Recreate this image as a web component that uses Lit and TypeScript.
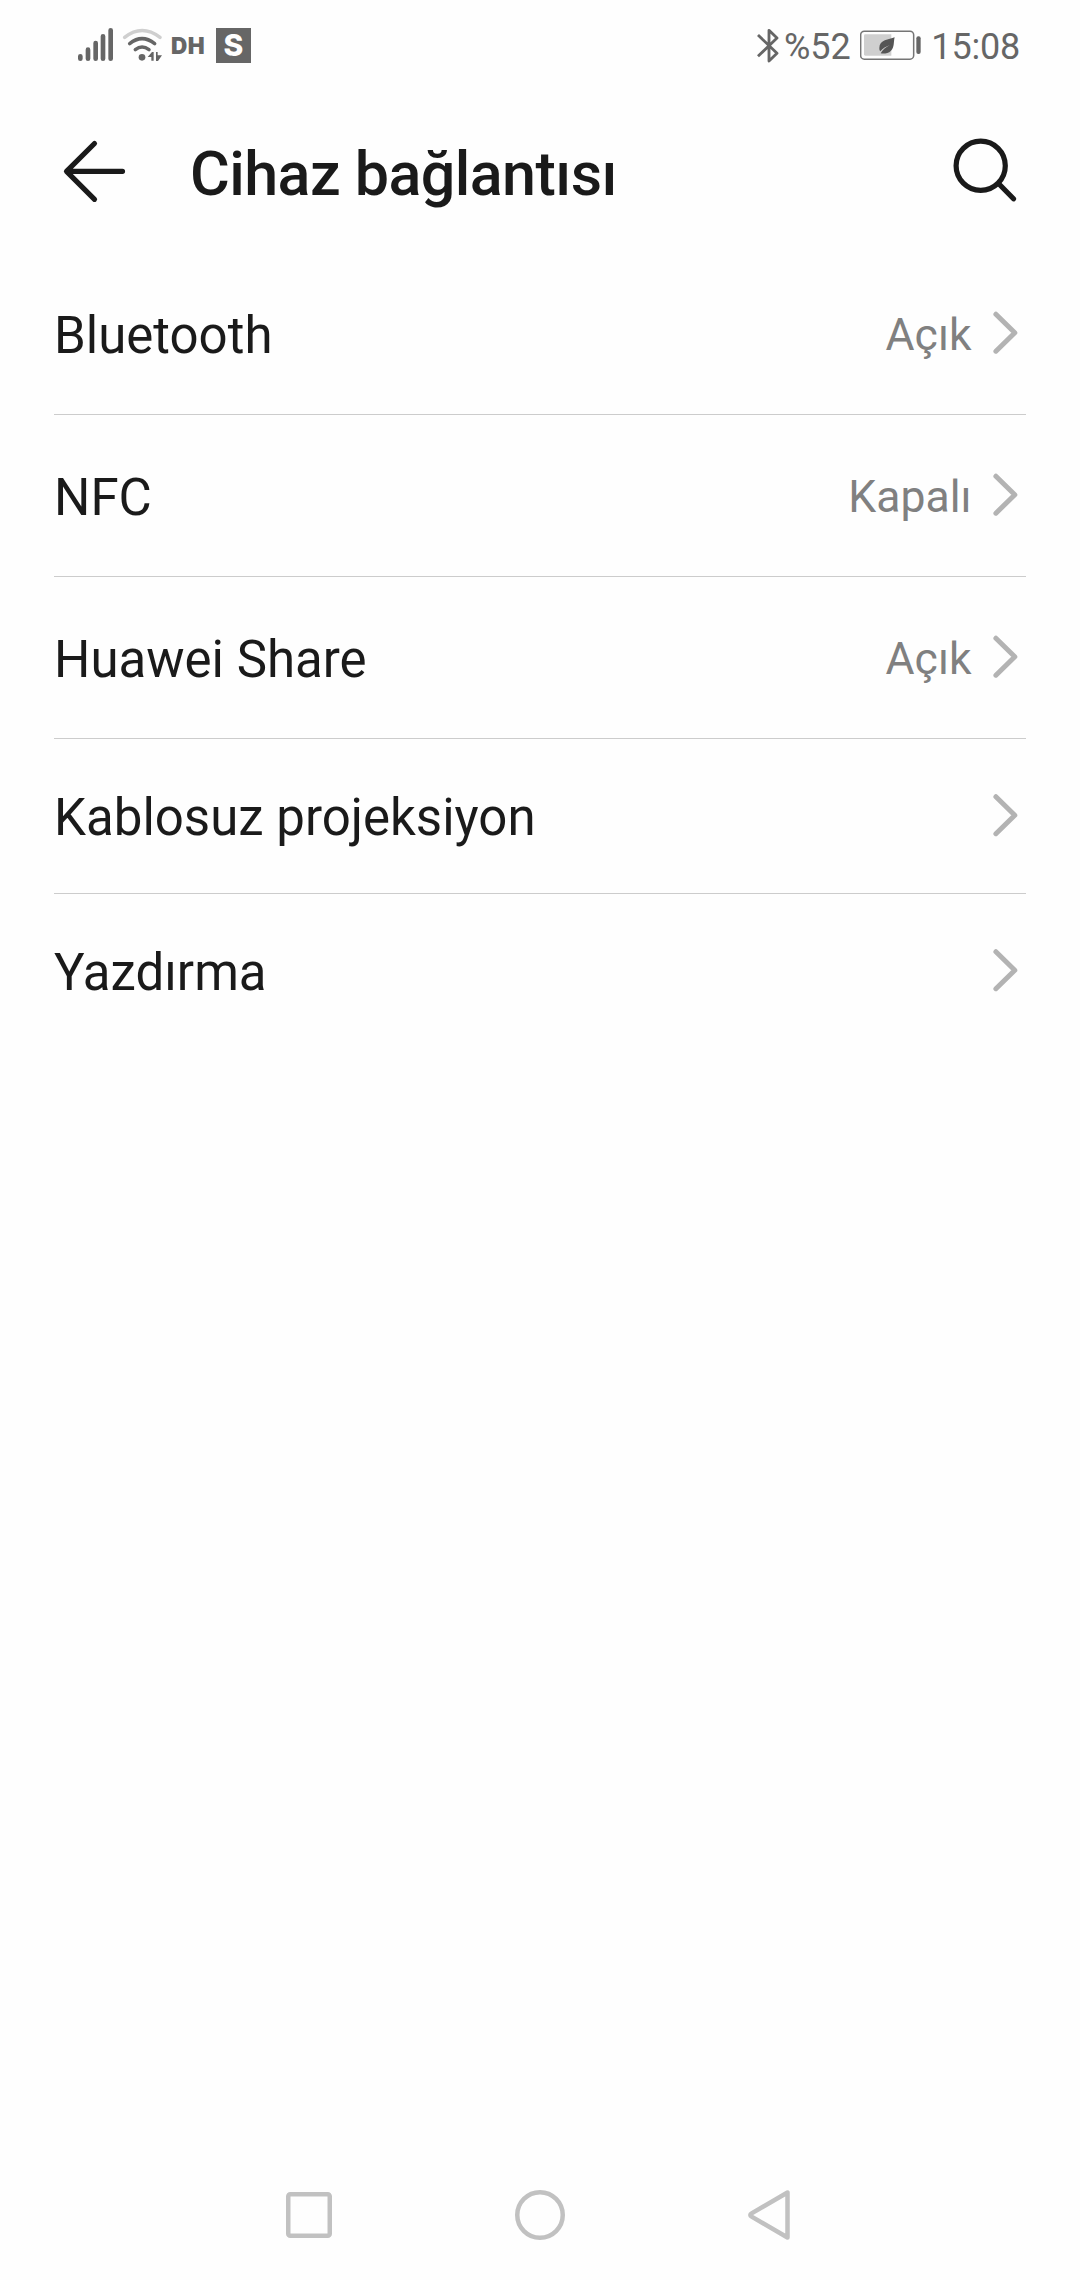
import { LitElement, html, css, svg, nothing } from "lit";
import { customElement, property } from "lit/decorators.js";

@customElement("status-bar")
class StatusBar extends LitElement {
  static styles = css`
    :host { display: flex; justify-content: space-between; height: 91px; color: #666; font-family: Roboto, sans-serif; }
    .left, .right { display: flex; align-items: flex-start; }
    .left { padding-left: 78px; }
    .right { padding-right: 60px; }
    svg { display: block; flex: none; }
    .signal { margin-top: 28px; }
    .wifi { margin: 28px 0 0 8px; }
    .carrier { font: 900 22.5px/26px Inter, sans-serif; letter-spacing: 0.5px; margin: 33px 0 0 8px; width: 45px; white-space: nowrap; }
    .badge { width: 35px; height: 35px; margin-top: 28px; background: #666; color: #fefefe; text-align: center; font: 800 30px/35px Inter, sans-serif; }
    .bt { margin-top: 28px; }
    .num { font-size: 36px; line-height: 42px; margin-top: 26px; white-space: nowrap; }
    .pct { margin-left: 5.5px; }
    .battery { margin: 30px 0 0 9px; }
    .clock { margin-left: 9.5px; letter-spacing: -0.2px; }
  `;
  render() {
    return html`
      <div class="left">
        <svg class="signal" width="36" height="34" viewBox="54 54 108 102" stroke="#666" stroke-width="14" stroke-linecap="round">
          <path d="M61 139V146M84 119V146M107 99V146M129 79V146M152 61V146" />
        </svg>
        <svg class="wifi" width="41" height="34" viewBox="186 54 123 102" fill="none" stroke-linecap="round" stroke-width="10.5">
          <path d="M194 82Q246 41 300 82" stroke="#cfcfcf" />
          <path d="M209 101Q246 71 284 101M226 119Q246 103 267 119" stroke="#666" />
          <circle cx="246" cy="142" r="10" fill="#666" />
          <path d="M263 141L276 126H281V152H274V141ZM288 126H293V136L306 136L294 153H288Z" fill="#666" />
        </svg>
        <span class="carrier">DH</span>
        <span class="badge">S</span>
      </div>
      <div class="right">
        <svg class="bt" width="22" height="35" viewBox="50 53 66 105" fill="none" stroke="#666" stroke-width="8.5" stroke-linejoin="round">
          <path d="M53 74L110 129L86 152V60L110 83L53 138" />
        </svg>
        <span class="num pct">%52</span>
        <svg class="battery" width="62" height="31" viewBox="359 61 186 93">
          <rect x="361" y="64.500" width="159" height="84" rx="11" fill="none" stroke="#757575" stroke-width="4.500" />
          <path d="M375 74H453V138H375Q371 138 371 134V78Q371 74 375 74Z" fill="#cfcfcf" />
          <path d="M463 83C446 90 417 90 417 115C417 120 418 123 420 125C427 116 438 110 448 107C437 113 427 120 421 131C430 133 443 132 452 123C463 112 459 98 463 83Z" fill="#555" />
          <rect x="528" y="80" width="13" height="53" rx="6" fill="#666" />
        </svg>
        <span class="num clock">15:08</span>
      </div>`;
  }
}

@customElement("app-header")
class AppHeader extends LitElement {
  static styles = css`
    :host { display: flex; align-items: flex-start; height: 162px; color: #1a1a1a; padding: 0 63px 0 62px; }
    svg { display: block; flex: none; fill: none; stroke: #1a1a1a; stroke-width: 5.2; stroke-linecap: round; stroke-linejoin: round; }
    .back { margin-top: 47px; }
    .search { margin-top: 45px; }
    h1 { flex: 1; margin: 47px 0 0 63px; font: 500 61px/72px Roboto, sans-serif; letter-spacing: -0.55px; white-space: nowrap; }
  `;
  render() {
    return html`
      <svg class="back" width="65" height="66" viewBox="62 138 65 66"><path d="M94.500 143.500L66.500 171.300L94.500 199.300M67 171.300H122.500" /></svg>
      <h1>Cihaz bağlantısı</h1>
      <svg class="search" width="66" height="68" viewBox="951 136 66 68"><circle cx="980.700" cy="165.800" r="24.600" /><path d="M999.500 184.500L1013.500 198.800" /></svg>`;
  }
}

@customElement("setting-row")
class SettingRow extends LitElement {
  @property() label = "";
  @property() value = "";
  static styles = css`
    :host { display: flex; align-items: center; font-family: Roboto, sans-serif; }
    .label { flex: 1; font-size: 51px; line-height: 60px; color: #1a1a1a; padding-top: 4px; white-space: nowrap; }
    .value { font-size: 44.5px; line-height: 52px; color: #808080; padding-top: 3px; margin-right: 19.5px; white-space: nowrap; }
    svg { display: block; margin-right: 7px; }
    .plain { padding-top: 1.5px; }
  `;
  render() {
    return html`
      <span class="label">${this.label}</span>
      ${this.value ? html`<span class="value">${this.value}</span>` : nothing}
      <svg class=${this.value ? "" : "plain"} width="28" height="46" viewBox="0 0 28 46" fill="none" stroke="#b3b3b3" stroke-width="5" stroke-linecap="round" stroke-linejoin="round"><path d="M4.900 3.200L23.800 21.700L4.900 40.200" /></svg>`;
  }
}

@customElement("nav-bar")
class NavBar extends LitElement {
  static styles = css`
    :host { display: flex; height: 130px; align-items: center; justify-content: space-between; padding: 0 288px 0 284px; }
    svg { display: block; fill: none; stroke: #c1c1c1; stroke-width: 4.5; stroke-linejoin: round; }
  `;
  shape(width: number, content: unknown) {
    return html`<svg width=${width} height="54" viewBox="0 0 ${width} 54">${content}</svg>`;
  }
  render() {
    return html`
      ${this.shape(50, svg`<rect x="4.250" y="6.250" width="41.500" height="41.500" rx="2" />`)}
      ${this.shape(54, svg`<circle cx="27" cy="27" r="22.750" />`)}
      ${this.shape(46, svg`<path d="M41.500 4.500V49.500L5.600 28.600Q3 27 5.600 25.400Z" />`)}`;
  }
}

@customElement("app-root")
class AppRoot extends LitElement {
  static styles = css`
    :host { display: flex; flex-direction: column; width: 1080px; height: 2280px; background: #fefefe; overflow: hidden; }
    .list { flex: 1; padding: 0 54px; }
    .row { height: 154px; border-bottom: 1px solid #ccc; }
    .row.tall { height: 161px; }
    .row:last-child { border-bottom: none; }
  `;
  rows = [
    { label: "Bluetooth", value: "Açık" },
    { label: "NFC", value: "Kapalı" },
    { label: "Huawei Share", value: "Açık" },
    { label: "Kablosuz projeksiyon", value: "" },
    { label: "Yazdırma", value: "" },
  ];
  render() {
    return html`
      <status-bar></status-bar>
      <app-header></app-header>
      <div class="list">
        ${this.rows.map((r) => html`<setting-row class="row ${r.value ? "tall" : ""}" .label=${r.label} .value=${r.value}></setting-row>`)}
      </div>
      <nav-bar></nav-bar>`;
  }
}
